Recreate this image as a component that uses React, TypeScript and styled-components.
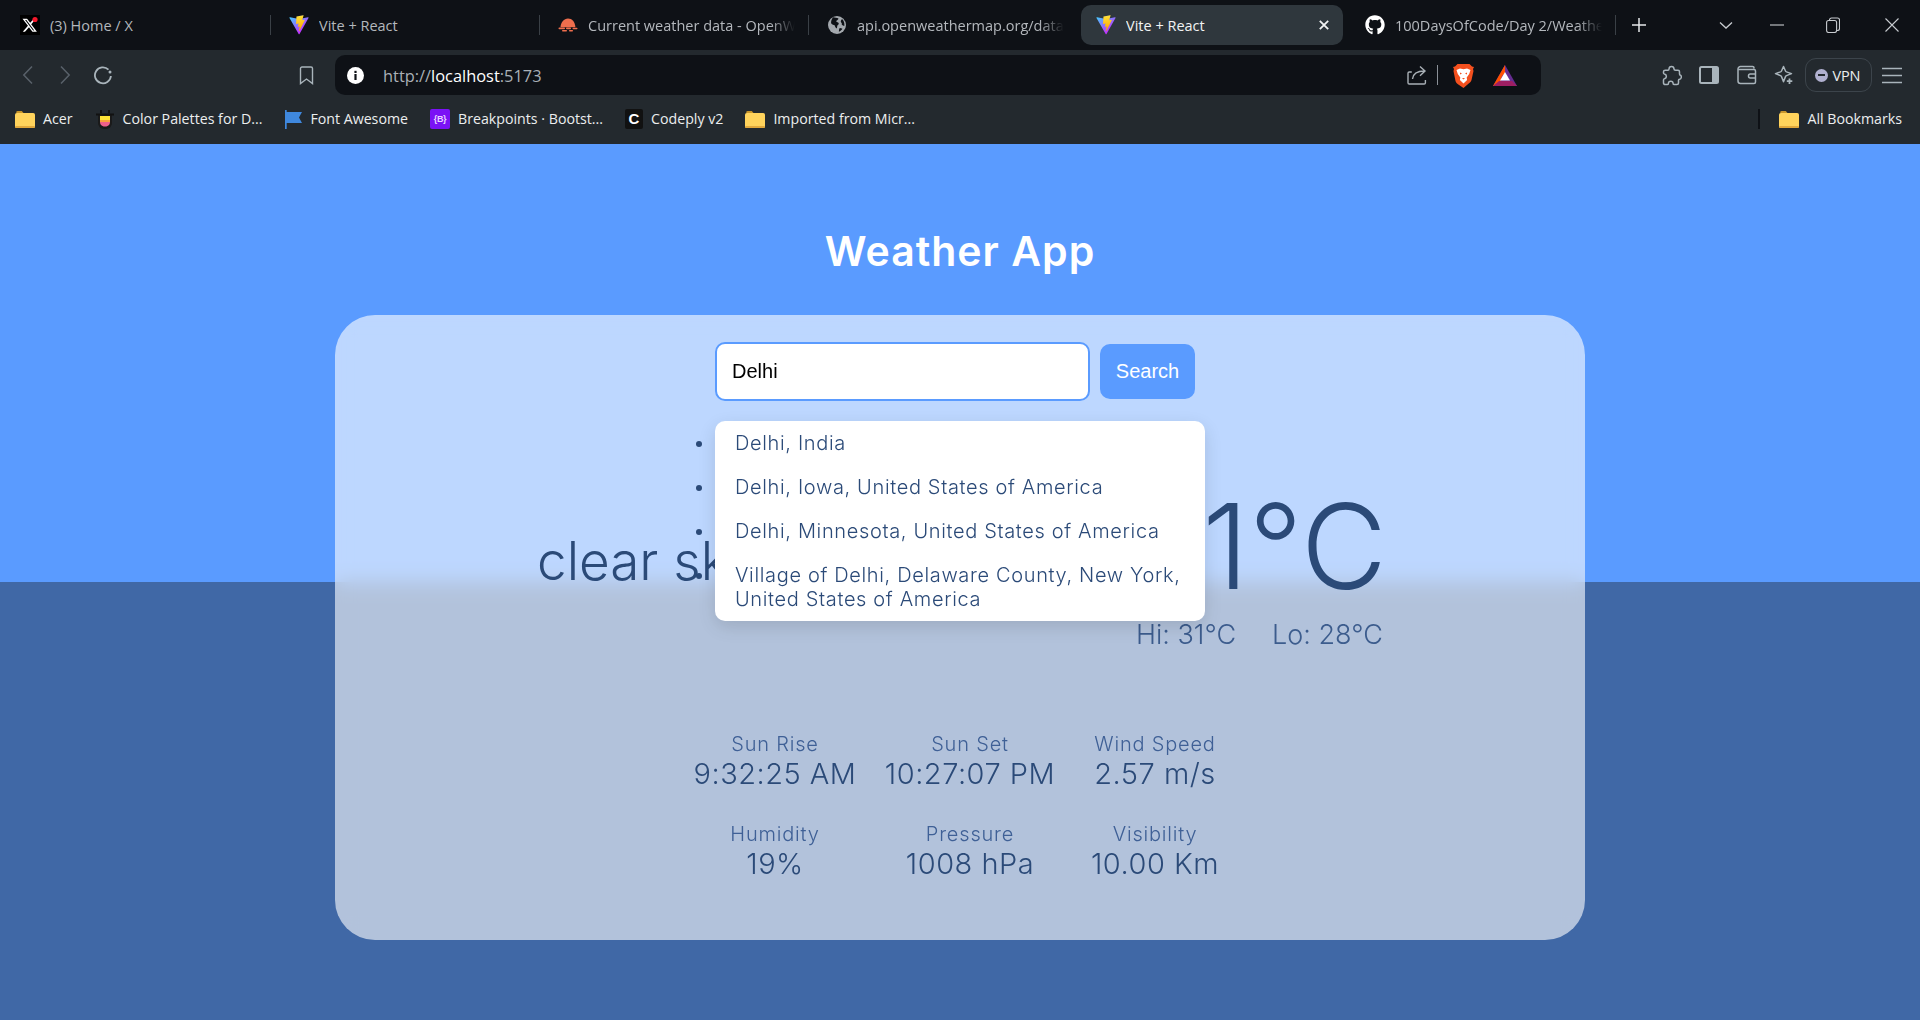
import React from "react";
import styled, { createGlobalStyle } from "styled-components";
import { FaGithub } from "react-icons/fa";

const Global = createGlobalStyle`
  html, body { margin: 0; padding: 0; background: #4068a6; }
  * { box-sizing: border-box; }
  body { font-family: "Inter", "Liberation Sans", sans-serif; overflow: hidden; }
`;

const Shell = styled.div`width: 1920px; height: 1020px; display: flex; flex-direction: column;`;

/* ---------- browser chrome ---------- */
const TabBar = styled.div`
  height: 50px; background: #0e1116; display: flex; align-items: center; padding-left: 5px;
  font-family: "Open Sans", "Roboto", sans-serif; font-size: 14.5px; color: #b4b8bd;
`;
const Tab = styled.div<{ $active?: boolean; $sep?: boolean }>`
  position: relative; width: 262px; height: 40px; margin-right: 7px; flex: none;
  display: flex; align-items: center; gap: 10px; padding: 0 10px 0 15px; border-radius: 10px;
  background: ${p => (p.$active ? "#2f373d" : "transparent")};
  color: ${p => (p.$active ? "#f2f3f4" : "#b4b8bd")};
  ${p => p.$sep && `&::after { content: ""; position: absolute; right: -4px; top: 10px; height: 20px; width: 1px; background: #3a4046; }`}
`;
const TabTitle = styled.span<{ $fade?: boolean }>`
  flex: 1; white-space: nowrap; overflow: hidden;
  ${p => p.$fade && `-webkit-mask-image: linear-gradient(to right, #000 88%, transparent); mask-image: linear-gradient(to right, #000 88%, transparent);`}
`;
const WindowControls = styled.div`
  flex: 1; display: flex; align-items: center; justify-content: flex-end; color: #c8ccd0;
`;
const NewTab = styled.div`width: 14px; height: 14px; margin-left: 13px; color: #e6e8ea; display: flex;`;
const WinBtn = styled.div<{ $w: number }>`width: ${p => p.$w}px; height: 16px; display: flex; justify-content: center;`;

const Toolbar = styled.div`height: 45px; background: #23292e; display: flex; align-items: flex-start; padding-top: 5px; color: #a9b4bb;`;
const NavGroup = styled.div`width: 335px; height: 40px; display: flex; align-items: center; padding: 0 10px 0 9px;`;
const Slot = styled.div<{ $dim?: boolean }>`
  width: 37.5px; height: 24px; display: flex; align-items: center; justify-content: center; flex: none;
  color: ${p => (p.$dim ? "#59616a" : "#a9b4bb")};
`;
const BookmarkSlot = styled(Slot)`margin-left: auto;`;
const UrlBar = styled.div`
  width: 1206px; height: 40px; background: #0e1116; border-radius: 10px; display: flex; align-items: center;
  padding: 0 24px 0 12px; font-family: "Open Sans", "Roboto", sans-serif; font-size: 16.4px; color: #a9b0b6; flex: none;
`;
const UrlHost = styled.span`color: #fff;`;
const UrlText = styled.div`margin-left: 19px; flex: 1;`;
const UrlDivider = styled.div`width: 1px; height: 20px; background: #8a9097; margin: 0 15px 0 10px;`;
const BatWrap = styled.div`margin-left: 19px; display: flex;`;
const RightGroup = styled.div`flex: 1; height: 40px; display: flex; align-items: center; padding-left: 112px;`;
const VpnPill = styled.div`
  width: 67px; height: 34px; margin-left: 1.5px; border: 1px solid #3c444b; border-radius: 11px; display: flex; align-items: center;
  gap: 5px; padding-left: 9px; font-family: "Open Sans", sans-serif; font-size: 14.5px; color: #eceeef; letter-spacing: -.2px;
`;
const VpnDot = styled.span`
  width: 13px; height: 13px; flex: none; border-radius: 50%; background: #b0b0cf; display: flex; align-items: center; justify-content: center;
  &::after { content: ""; width: 7px; height: 2px; background: #23292e; }
`;
const MenuSlot = styled(Slot)`margin-left: 1.5px;`;

const BookmarkBar = styled.div`
  height: 49px; background: #23292e; display: flex; align-items: center; padding: 0 18px 2px 15px; gap: 22px;
  font-family: "Open Sans", "Roboto", sans-serif; font-size: 14.2px; color: #eceeef;
`;
const Bookmark = styled.div`display: flex; align-items: center; gap: 8px; white-space: nowrap;`;
const BookmarkRight = styled.div`
  margin-left: auto; display: flex; align-items: center; gap: 19px;
`;
const BarDivider = styled.div`width: 2px; height: 20px; background: #0e1116;`;
const BootIcon = styled.span`
  width: 20px; height: 20px; background: #7a12f5; border-radius: 2px; display: flex; align-items: center; justify-content: center;
  font: 700 9px "Liberation Sans", sans-serif; color: #e8d6ff; letter-spacing: -.3px;
`;
const CodeplyIcon = styled.span`
  width: 18px; height: 20px; background: #111; border-radius: 2px; display: flex; align-items: center; justify-content: center;
  font: 900 15px "Liberation Sans", sans-serif; color: #fff;
`;

/* ---------- page ---------- */
const Main = styled.main`
  flex: 1; display: flex; flex-direction: column; align-items: center; padding-top: 83px;
  background: linear-gradient(to bottom, #5a9bff 0, #5a9bff 438px, #4068a6 438px, #4068a6 100%);
`;
const Title = styled.h1`
  margin: 0; font-size: 41px; line-height: 48px; font-weight: 600; color: #fff; letter-spacing: 1px;
`;
const Card = styled.section`
  width: 1250px; height: 625px; margin-top: 40px; padding-top: 27px; border-radius: 40px;
  background: rgba(255, 255, 255, .6); backdrop-filter: blur(10px);
  display: flex; flex-direction: column; align-items: center; color: #2b4a78;
`;
const SearchWrap = styled.div`position: relative; width: 490px; height: 59px; display: flex; align-items: center; gap: 10px;`;
const SearchInput = styled.input`
  width: 375px; height: 59px; border: 2px solid #5a9bff; border-radius: 10px; background: #fff; padding: 0 15px;
  font: 20px "Liberation Sans", sans-serif; color: #000; outline: none;
`;
const SearchButton = styled.button`
  width: 95px; height: 55px; border: 0; border-radius: 10px; background: #5a9bff; color: #fff;
  font: 20px "Liberation Sans", sans-serif; padding: 0;
`;
const Suggestions = styled.ul`
  position: absolute; top: 79px; left: 0; width: 490px; margin: 0; padding: 0; background: #fff; border-radius: 10px;
  box-shadow: 0 6px 18px rgba(0, 0, 0, .12); z-index: 2; list-style: disc; color: #2b4a78; white-space: pre-line;
`;
const Suggestion = styled.li`
  padding: 10px 20px; font-size: 20px; line-height: 24px; font-weight: 300; letter-spacing: .65px;
`;
const WeatherRow = styled.div`
  width: 846px; margin-top: 16px; display: flex; justify-content: space-between; align-items: flex-start;
`;
const Condition = styled.div`
  font-size: 53px; line-height: 60px; font-weight: 300; margin-top: 114px;
`;
const TempBlock = styled.div`display: flex; flex-direction: column; align-items: flex-end;`;
const Temp = styled.div`font-size: 118px; line-height: 130px; font-weight: 300; margin: 64px -4px 0 0;`;
const HiLo = styled.div`display: flex; gap: 36px; font-size: 27px; line-height: 34px; font-weight: 300; margin-top: 7px; color: #3c5c8d;`;
const StatsGrid = styled.div`
  margin-top: 80px; display: grid; grid-template-columns: 154px 170px 134px; column-gap: 33px; row-gap: 30px; justify-content: center;
`;
const Stat = styled.div`display: flex; flex-direction: column; align-items: center; white-space: nowrap;`;
const StatLabel = styled.div`font-size: 20px; line-height: 24px; font-weight: 300; color: #3f6096; letter-spacing: .8px;`;
const StatValue = styled.div`font-size: 29px; line-height: 36px; font-weight: 300; color: #2b4a78; letter-spacing: .5px;`;

/* ---------- icons ---------- */
const XFav = () => (
  <svg width="20" height="20" viewBox="0 0 20 20"><rect width="20" height="20" fill="#000" />
    <path transform="translate(2.5 3) scale(.6)" d="M18.901 1.153h3.68l-8.04 9.19L24 22.846h-7.406l-5.8-7.584-6.638 7.584H.474l8.6-9.83L0 1.154h7.594l5.243 6.932ZM17.61 20.644h2.039L6.486 3.24H4.298Z" fill="#fff" />
    <circle cx="15" cy="4.5" r="2.6" fill="#f4182c" /></svg>
);
const ViteFav = () => (
  <svg width="20" height="20" viewBox="0 0 410 404">
    <defs>
      <linearGradient id="va" x1="6" y1="33" x2="235" y2="344" gradientUnits="userSpaceOnUse"><stop stopColor="#41D1FF" /><stop offset="1" stopColor="#BD34FE" /></linearGradient>
      <linearGradient id="vb" x1="194.65" y1="8.8" x2="236.08" y2="292.99" gradientUnits="userSpaceOnUse"><stop stopColor="#FFEA83" /><stop offset=".0833" stopColor="#FFDD35" /><stop offset="1" stopColor="#FFA800" /></linearGradient>
    </defs>
    <path fill="url(#va)" d="M399.641 59.5246 215.643 388.545c-3.799 6.793-13.559 6.833-17.415.073L10.5817 59.5563C6.38087 52.1896 12.6802 43.2665 21.0281 44.7586L205.223 77.6824c1.175.2101 2.378.208 3.553-.0062l180.343-32.8228c8.32-1.5143 14.649 7.3379 10.522 14.6712Z" />
    <path fill="url(#vb)" d="M292.965 1.5744 156.801 28.2552c-2.238.4385-3.895 2.3351-4.03 4.6118l-8.376 141.464c-.197 3.332 2.863 5.918 6.115 5.168l37.91-8.749c3.547-.818 6.752 2.306 6.023 5.873l-11.263 55.153c-.758 3.712 2.727 6.886 6.352 5.785l23.415-7.114c3.63-1.102 7.118 2.081 6.35 5.796l-17.899 86.633c-1.12 5.419 6.088 8.374 9.094 3.728l2.008-3.103 110.954-221.428c1.858-3.707-1.346-7.935-5.418-7.149l-39.022 7.531c-3.667.707-6.787-2.708-5.752-6.296l25.469-88.291c1.036-3.594-2.095-7.012-5.766-6.293Z" />
  </svg>
);
const WeatherFav = () => (
  <svg width="20" height="20" viewBox="0 0 20 20" fill="#ee6e4d">
    <path d="M2.5 12.2C2.8 7 6 3.5 10 3.5s7 3.4 7.4 8.7z" />
    <rect x="0.5" y="12.6" width="6.5" height="1.6" rx=".8" /><rect x="8" y="12.6" width="5" height="1.6" rx=".8" /><rect x="14.5" y="12.8" width="5" height="1.4" rx=".7" />
    <rect x="4" y="15" width="5" height="1.5" rx=".7" /><rect x="11" y="15" width="4" height="1.5" rx=".7" />
  </svg>
);
const GlobeFav = () => (
  <svg width="20" height="20" viewBox="0 0 20 20"><circle cx="10" cy="10" r="9" fill="#a3a8ad" />
    <path d="M6 2.2c2 .4 4 .4 5.5 1.2-.2 1.4-1.6 1.7-2.4 2.8.4 1 2.2.8 2.6 2 .3 1-.6 1.6-1.3 2.3-.4 1 0 2.2-.8 3-1.3-.6-1.4-2-2-3.2-.9-.6-2.4-.6-3.2-1.6C3.5 7.300 4.500 4.200 6 2.200zM15 4c1.800 1.600 2.800 4.200 2.300 7-.9-.2-2-.7-2.600-1.500.6-.9-.5-1.900-.9-2.700-.1-1.100.6-1.900 1.200-2.800zM12.800 13c.9.300 1.800.400 2.600.8-.8 1.400-2 2.400-3.500 3 .1-1.400 0-2.800.9-3.800z" fill="#0e1116" />
  </svg>
);
const Chevron = ({ dir }: { dir: "l" | "r" }) => (
  <svg width="12" height="20" viewBox="0 0 12 20" fill="none" stroke="currentColor" strokeWidth="1.5"><path d={dir === "l" ? "M10 1.500 1.800 10 10 18.500" : "M2 1.500 10.200 10 2 18.500"} /></svg>
);
const Reload = () => (
  <svg width="20" height="20" viewBox="0 0 20 20" fill="none" stroke="currentColor" strokeWidth="1.800"><path d="M15.500 4.600A8 8 0 1 0 17.900 11" /><circle cx="17" cy="7" r="1.500" fill="currentColor" stroke="none" /></svg>
);
const BookmarkIcon = () => (
  <svg width="15" height="19" viewBox="0 0 15 19" fill="none" stroke="currentColor" strokeWidth="1.400"><path d="M1.500 2.500a1.500 1.500 0 0 1 1.500-1.500h9a1.500 1.500 0 0 1 1.500 1.500v15l-6-4.500-6 4.500z" /></svg>
);
const InfoIcon = () => (
  <svg width="17" height="17" viewBox="0 0 17 17"><circle cx="8.500" cy="8.500" r="8.500" fill="#fff" /><rect x="7.400" y="7" width="2.200" height="6" fill="#0e1116" /><rect x="7.400" y="3.800" width="2.200" height="2.200" fill="#0e1116" /></svg>
);
const ShareIcon = () => (
  <svg width="20" height="20" viewBox="0 0 20 20" fill="none" stroke="#a9b0b6" strokeWidth="1.400"><path d="M4.800 7H2.200A1.200 1.200 0 0 0 1 8.200v9.600A1.200 1.200 0 0 0 2.200 19h15a1.200 1.200 0 0 0 1.200-1.200V15" /><path d="M5.500 14c.5-5 4.500-8 12-8M13 1.500 18 6l-5 4.700" /></svg>
);
const BraveIcon = () => (
  <svg width="21" height="25" viewBox="0 0 21 25">
    <path d="M4.500 1h12l2.500 2.500 2 .5-1 2 .5 2-2 9c-.4 1.600-1.400 2.500-2.800 3.400L10.500 25l-5.200-3.600C3.900 20.500 2.900 19.600 2.500 18L.5 8 1 6 0 4l2-.5z" fill="#f4501e" />
    <path d="M3.500 7 7 5.500l3.500.8 3.500-.8L17.500 7l-1.300 4-2.500 3.500.4 2.500-3.600 3.500L6.900 17l.4-2.500L4.800 11z" fill="#fff" />
    <path d="M7 9.500l2 1-2 1zM14 9.500l-2 1 2 1zM9 15h3l-1.500 1.500z" fill="#f4501e" />
  </svg>
);
const BatIcon = () => (
  <svg width="24" height="21" viewBox="0 0 24 21">
    <path d="M12 0 24 21H0z" fill="#662d91" /><path d="M12 0 0 21h6z" fill="#ff5000" /><path d="M12 0 6 14l6-6z" fill="#ff5000" /><path d="M0 21h24l-5-5H6z" fill="#9e1f63" />
    <path d="M12 7 17 15.500H7z" fill="#fff" />
  </svg>
);
const PuzzleIcon = () => (
  <svg width="20" height="21" viewBox="0 0 20 21" fill="none" stroke="currentColor" strokeWidth="1.500" strokeLinejoin="round"><path d="M7 4c0-3.500 5-3.500 5 0 0 1 .5 1.200 1.500 1.200h2.500c1 0 1.500.5 1.500 1.500V9c0 1 .300 1.200 1 1.200 1.500 1 .8 4.300-1 4-.8 0-1 .5-1 1v2.800c0 1-.5 1.500-1.500 1.500H12c-1 0-1-.7-1-1.500 0-2.500-4.500-2.500-4.500 0 0 .8-.3 1.500-1 1.500H3.200c-1 0-1.700-.5-1.700-1.500v-3c0-1 1-1.200 1.500-1.500 1.800-.8 1.800-3.400 0-4.200C2.500 9 1.500 9 1.500 8V6.700c0-1 .7-1.500 1.700-1.500H6C7 5.200 7 4.800 7 4z" /></svg>
);
const SidebarIcon = () => (
  <svg width="20" height="18" viewBox="0 0 20 18"><rect x="1" y="1" width="18" height="16" rx="1.500" fill="none" stroke="currentColor" strokeWidth="2" /><rect x="13" y="1" width="6" height="16" fill="currentColor" /></svg>
);
const WalletIcon = () => (
  <svg width="20" height="20" viewBox="0 0 20 20" fill="none" stroke="currentColor" strokeWidth="1.500"><path d="M17 3.500V2.800C17 2 16.500 1.500 15.500 1.500H3.500C2.200 1.500 1 2.500 1 4v12c0 1.500 1 2.500 2.500 2.500H17c1 0 1.500-.7 1.500-1.500V6c0-1-.5-1.500-1.500-1.500H1.800" /><path d="M18.500 9h-5.300c-1.200 0-1.700 1-1.700 2s.5 2 1.700 2h5.300" /></svg>
);
const SparkIcon = () => (
  <svg width="20" height="20" viewBox="0 0 20 20" fill="none" stroke="currentColor" strokeWidth="1.500"><path d="M9.500 1.500 11.500 6c.2.500.5.700 1 .9l5 1.700-5 2c-.5.200-.8.500-1 1l-2 5-2-5c-.2-.5-.5-.8-1-1l-5-2 5-1.700c.5-.2.8-.4 1-.9z" strokeLinejoin="round" /><path d="M15.500 13.500v5.500M12.800 16.200h5.500" strokeWidth="1.800" /></svg>
);
const MenuIcon = () => (
  <svg width="20" height="17" viewBox="0 0 20 17" stroke="currentColor" strokeWidth="1.300"><path d="M0 1.500h20M0 8.500h20M0 15.500h20" /></svg>
);
const Folder = () => (
  <svg width="20" height="18" viewBox="0 0 20 18"><path d="M1 2.500A1.500 1.500 0 0 1 2.500 1h4.300L8.500 3H2z" fill="#c9962c" /><rect x="0" y="3" width="20" height="15" rx="1.800" fill="#ffd35c" /><rect x="0" y="16" width="20" height="2" rx="1" fill="#e2a93c" /></svg>
);
const PaletteFav = () => (
  <svg width="20" height="22" viewBox="0 0 20 22">
    <path d="M3 7h14v8a6 6 0 0 1-6 6H9a6 6 0 0 1-6-6z" fill="#1a1a1a" />
    <path d="M5 8h10v4H5z" fill="#fbe136" /><path d="M5 12h10v2H5z" fill="#f9a13c" /><path d="M5 14h10c0 2-1 4.500-5 4.500S5 16 5 14z" fill="#f0608b" />
    <rect x="1" y="5.500" width="18" height="2" fill="#111" /><rect x="5" y="2" width="2" height="3.500" fill="#111" /><rect x="13" y="2" width="2" height="3.500" fill="#111" />
  </svg>
);
const FlagIcon = () => (
  <svg width="18" height="20" viewBox="0 0 18 20"><path d="M1 1h1.700v2H18l-3 5.500L18 14H2.700v6H1z" fill="#3f88de" /></svg>
);

const tabs = [
  { icon: <XFav />, title: "(3) Home / X", sep: true },
  { icon: <ViteFav />, title: "Vite + React", sep: true },
  { icon: <WeatherFav />, title: "Current weather data - OpenWeatherMap", fade: true, sep: true },
  { icon: <GlobeFav />, title: "api.openweathermap.org/data/2.5/weather", fade: true },
  { icon: <ViteFav />, title: "Vite + React", active: true },
  { icon: <FaGithub size={20} color="#fff" />, title: "100DaysOfCode/Day 2/Weather App", fade: true, sep: true },
];

const stats = [
  ["Sun Rise", "9:32:25 AM"], ["Sun Set", "10:27:07 PM"], ["Wind Speed", "2.57 m/s"],
  ["Humidity", "19%"], ["Pressure", "1008 hPa"], ["Visibility", "10.00 Km"],
];

export default function App() {
  return (
    <Shell>
      <Global />
      <TabBar>
        {tabs.map(t => (
          <Tab key={t.title + t.active} $active={t.active} $sep={t.sep}>
            {t.icon}
            <TabTitle $fade={t.fade}>{t.title}</TabTitle>
            {t.active && (
              <svg width="10" height="10" viewBox="0 0 10 10" stroke="#f2f3f4" strokeWidth="1.800" style={{ marginRight: 4 }}><path d="M.8.8l8.400 8.400M9.200.8.800 9.200" /></svg>
            )}
          </Tab>
        ))}
        <NewTab>
          <svg width="14" height="14" viewBox="0 0 14 14" stroke="currentColor" strokeWidth="1.500"><path d="M7 0v14M0 7h14" /></svg>
        </NewTab>
        <WindowControls>
          <WinBtn $w={50}><svg width="14" height="16" viewBox="0 0 14 16" fill="none" stroke="currentColor" strokeWidth="1.300"><path d="M1 5.500 7 11l6-5.500" /></svg></WinBtn>
          <WinBtn $w={52}><svg width="14" height="16" viewBox="0 0 14 16" stroke="currentColor" strokeWidth="1.100"><path d="M0 8h14" /></svg></WinBtn>
          <WinBtn $w={60}><svg width="14" height="16" viewBox="0 0 14 16" fill="none" stroke="currentColor" strokeWidth="1.100"><rect x=".6" y="3.500" width="10" height="12" rx="2" /><path d="M3.500 3.500V3a2 2 0 0 1 2-2h6a2 2 0 0 1 2 2v8.500a2 2 0 0 1-2 2h-1" /></svg></WinBtn>
          <WinBtn $w={57}><svg width="14" height="16" viewBox="0 0 14 16" stroke="currentColor" strokeWidth="1.100"><path d="M.5 1.500l13 13M13.500 1.500l-13 13" /></svg></WinBtn>
        </WindowControls>
      </TabBar>

      <Toolbar>
        <NavGroup>
          <Slot $dim><Chevron dir="l" /></Slot>
          <Slot $dim><Chevron dir="r" /></Slot>
          <Slot><Reload /></Slot>
          <BookmarkSlot><BookmarkIcon /></BookmarkSlot>
        </NavGroup>
        <UrlBar>
          <InfoIcon />
          <UrlText>http://<UrlHost>localhost</UrlHost>:5173</UrlText>
          <ShareIcon />
          <UrlDivider />
          <BraveIcon />
          <BatWrap><BatIcon /></BatWrap>
        </UrlBar>
        <RightGroup>
          <Slot><PuzzleIcon /></Slot>
          <Slot><SidebarIcon /></Slot>
          <Slot><WalletIcon /></Slot>
          <Slot><SparkIcon /></Slot>
          <VpnPill><VpnDot />VPN</VpnPill>
          <MenuSlot><MenuIcon /></MenuSlot>
        </RightGroup>
      </Toolbar>

      <BookmarkBar>
        <Bookmark><Folder />Acer</Bookmark>
        <Bookmark><PaletteFav />Color Palettes for D...</Bookmark>
        <Bookmark><FlagIcon />Font Awesome</Bookmark>
        <Bookmark><BootIcon>{"{B}"}</BootIcon>Breakpoints · Bootst...</Bookmark>
        <Bookmark><CodeplyIcon>C</CodeplyIcon>Codeply v2</Bookmark>
        <Bookmark><Folder />Imported from Micr...</Bookmark>
        <BookmarkRight>
          <BarDivider />
          <Bookmark><Folder />All Bookmarks</Bookmark>
        </BookmarkRight>
      </BookmarkBar>

      <Main>
        <Title>Weather App</Title>
        <Card>
          <SearchWrap>
            <SearchInput defaultValue="Delhi" />
            <SearchButton>Search</SearchButton>
            <Suggestions>
              <Suggestion>Delhi, India</Suggestion>
              <Suggestion>Delhi, Iowa, United States of America</Suggestion>
              <Suggestion>Delhi, Minnesota, United States of America</Suggestion>
              <Suggestion>{"Village of Delhi, Delaware County, New York,\nUnited States of America"}</Suggestion>
            </Suggestions>
          </SearchWrap>
          <WeatherRow>
            <Condition>clear sky</Condition>
            <TempBlock>
              <Temp>31°C</Temp>
              <HiLo><span>Hi: 31°C</span><span>Lo: 28°C</span></HiLo>
            </TempBlock>
          </WeatherRow>
          <StatsGrid>
            {stats.map(([l, v]) => (
              <Stat key={l}><StatLabel>{l}</StatLabel><StatValue>{v}</StatValue></Stat>
            ))}
          </StatsGrid>
        </Card>
      </Main>
    </Shell>
  );
}
